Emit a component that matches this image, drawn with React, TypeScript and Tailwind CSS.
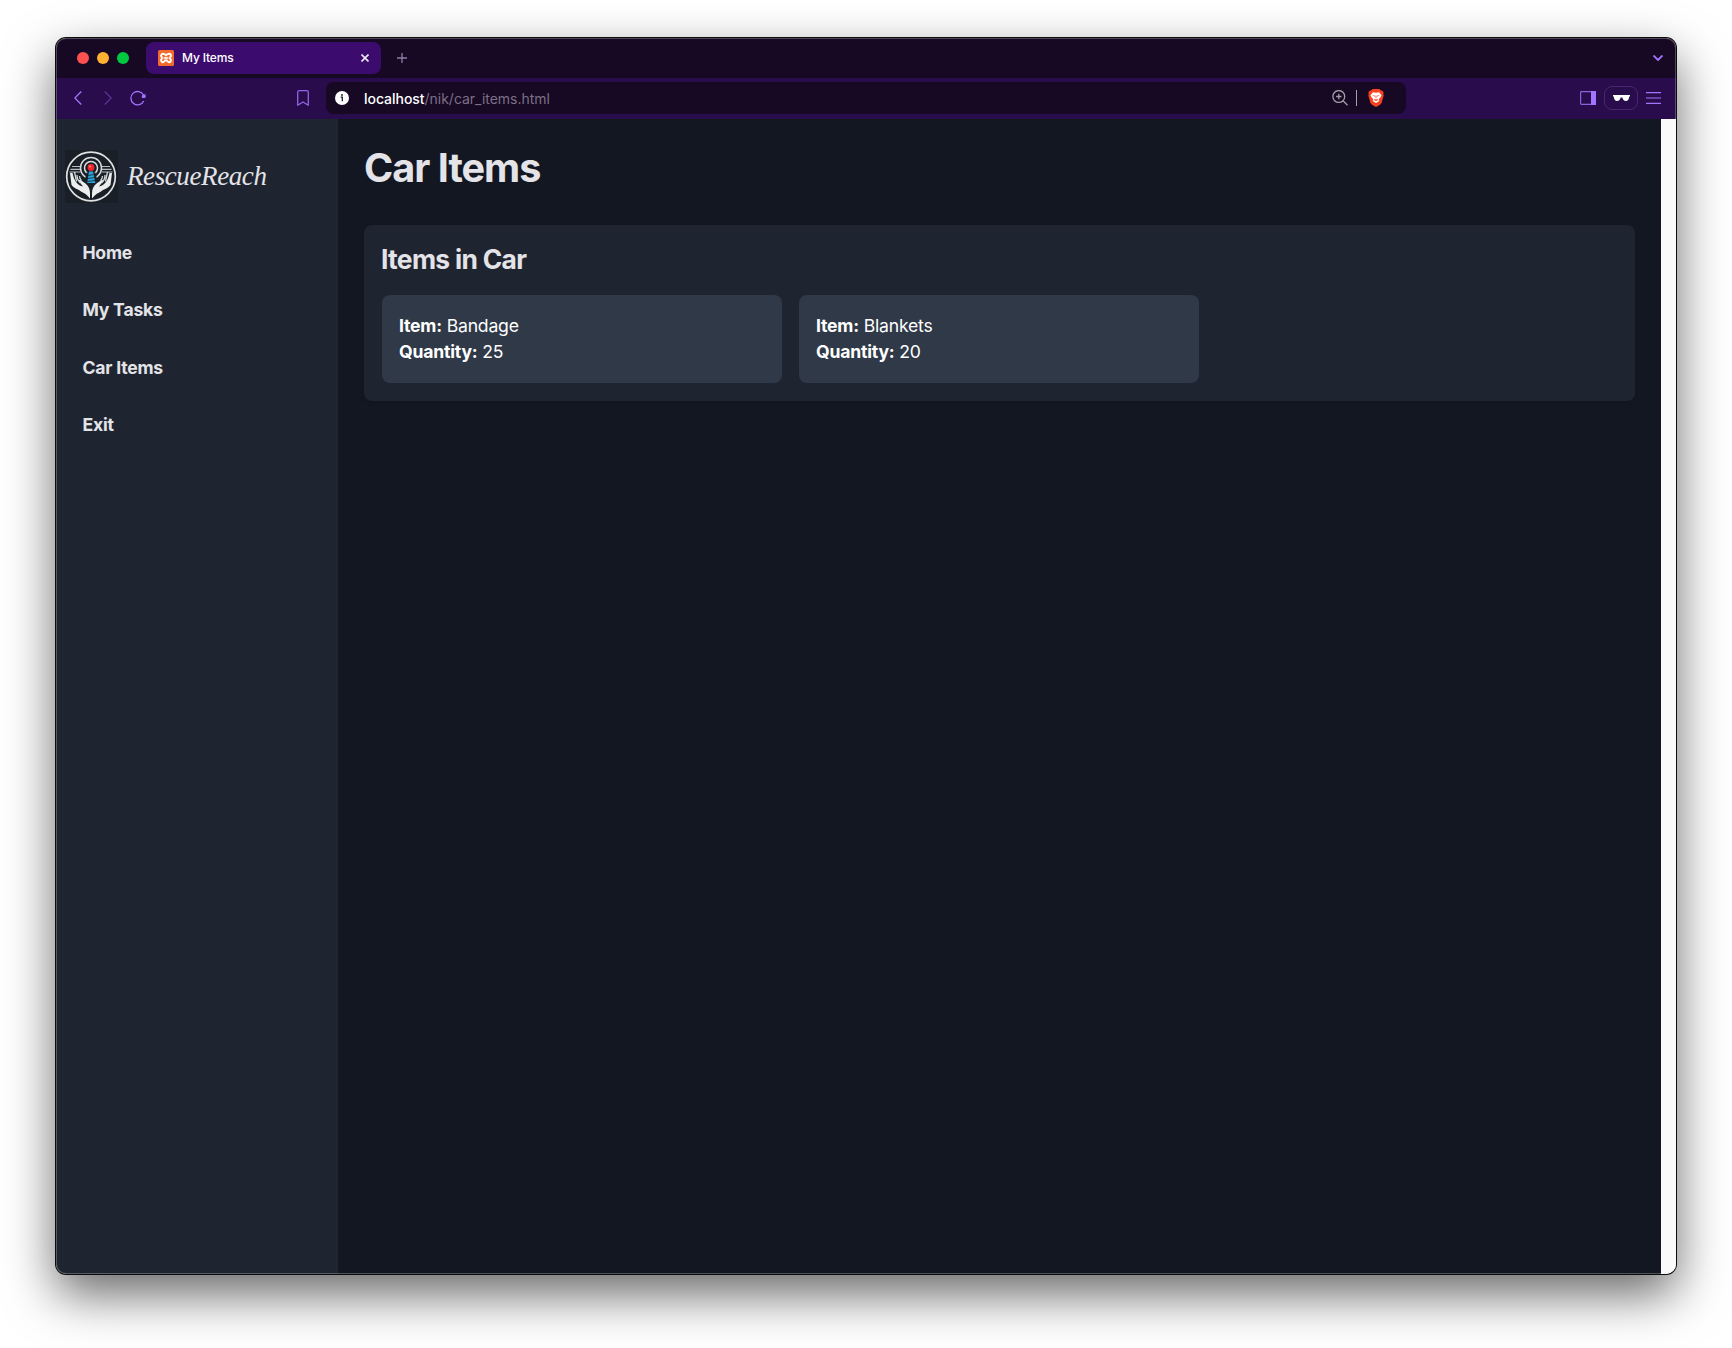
import React from "react";

const items = [
  { name: "Bandage", quantity: 25 },
  { name: "Blankets", quantity: 20 },
];
const links = ["Home", "My Tasks", "Car Items", "Exit"];

function Favicon() {
  return (
    <svg className="h-4 w-4 shrink-0" viewBox="0 0 16 16" fill="none">
      <rect width="16" height="16" rx="1.5" fill="#f26b2c" />
      <path
        d="M5 3.800c1.300 0 1.600.9 3 .9s1.700-.9 3-.9a1.900 1.900 0 0 1 1.900 1.900c0 1-.9 1.300-.9 2.300s.9 1.300.9 2.300a1.900 1.900 0 0 1-1.900 1.900c-1.300 0-1.500-2-3-2s-1.700 2-3 2a1.900 1.900 0 0 1-1.900-1.900c0-1 .9-1.300.9-2.300s-.9-1.300-.9-2.300A1.900 1.900 0 0 1 5 3.800Z"
        stroke="#fff"
        strokeWidth="1.900"
      />
      <path d="M5.500 8h5M8 4.500v1.800" stroke="#fff" strokeWidth="1.500" />
    </svg>
  );
}

function TabStrip() {
  return (
    <div className="flex h-10 shrink-0 items-center bg-[#170823]">
      <div className="flex gap-2 pl-[21px]">
        <span className="h-3 w-3 rounded-full bg-[#ff5152]" />
        <span className="h-3 w-3 rounded-full bg-[#ffb134]" />
        <span className="h-3 w-3 rounded-full bg-[#00c93f]" />
      </div>
      <div className="ml-[17px] flex h-8 w-[235px] items-center rounded-lg bg-[#3b0c6e] pl-3">
        <Favicon />
        <span className="ml-2 text-[12px] font-medium tracking-[-0.15px] text-white">My Items</span>
        <svg className="mr-3 ml-auto h-2 w-2" viewBox="0 0 8 8" stroke="#eee9f5" strokeWidth="1.600">
          <path d="M.5.5l7 7M7.500.5l-7 7" />
        </svg>
      </div>
      <svg className="ml-4 h-[10px] w-[10px]" viewBox="0 0 10 10" stroke="#8f7da6" strokeWidth="1.300">
        <path d="M5 0v10M0 5h10" />
      </svg>
      <svg className="mr-[13px] ml-auto h-[6px] w-[10px]" viewBox="0 0 10 6" fill="none" stroke="#a274ff" strokeWidth="1.800">
        <path d="M.5.500 5 5 9.500.500" />
      </svg>
    </div>
  );
}

function Toolbar() {
  return (
    <div className="flex h-[41px] shrink-0 items-center bg-[#280c4b] pb-px">
      <svg className="ml-[18px] h-[14px] w-2" viewBox="0 0 8 14" fill="none" stroke="#a274ff" strokeWidth="1.300">
        <path d="M7.300.5.800 7l6.500 6.500" />
      </svg>
      <svg className="ml-[22px] h-[14px] w-2" viewBox="0 0 8 14" fill="none" stroke="#5b3394" strokeWidth="1.300">
        <path d="M.700.5 7.200 7 .700 13.500" />
      </svg>
      <svg className="ml-[18px] h-4 w-4" viewBox="0 0 16 16" fill="none" stroke="#a274ff" strokeWidth="1.300">
        <path d="M13.500 5A6.700 6.700 0 1 0 13.700 11" />
        <path d="M15.500 3.500v4.300h-4z" fill="#a274ff" stroke="none" />
        <circle cx="13.600" cy="6.200" r="1.700" fill="#a274ff" stroke="none" />
      </svg>
      <svg className="ml-[151px] h-4 w-3" viewBox="0 0 12 16" fill="none" stroke="#9166e6" strokeWidth="1.300" strokeLinejoin="round">
        <path d="M.7 15.200V2.200C.7 1.300 1.300.7 2.200.7h7.600c.900 0 1.500.6 1.500 1.500v13L6 12z" />
      </svg>
      <div className="ml-[17px] flex h-8 w-[1080px] items-center rounded-lg bg-[#170823] pl-[9px]">
        <svg className="h-[14px] w-[14px]" viewBox="0 0 14 14">
          <circle cx="7" cy="7" r="7" fill="#fff" />
          <circle cx="7" cy="4" r=".9" fill="#170823" />
          <path d="M5.700 6.200H7.300v4" stroke="#170823" strokeWidth="1.200" fill="none" />
        </svg>
        <span className="ml-[15px] text-[14px] tracking-[-0.03px] text-[#7b7086]">
          <span className="font-medium text-white">localhost</span>/nik/car_items.html
        </span>
        <svg className="ml-auto h-4 w-4" viewBox="0 0 16 16" fill="none" stroke="#a39ea9" strokeWidth="1.300">
          <circle cx="6.800" cy="6.500" r="5.900" />
          <path d="M11 10.800l4.500 4.500M6.800 3.800v5.400M4.100 6.500h5.400" />
        </svg>
        <span className="ml-2 h-4 w-px bg-[#a39ea9]" />
        <svg className="mr-[22px] ml-[11px] h-[18px] w-4" viewBox="0 0 16 18">
          <path
            d="M4.500 0h7l1.400 1.500 1.600.2 1.200 2-.5 1.500.5 1.300-2.200 7.600c-.300 1-3 2.700-5.500 3.900-2.500-1.200-5.200-2.900-5.500-3.900L.300 6.500.800 5.200.300 3.700l1.200-2 1.600-.2z"
            fill="#fb4220"
          />
          <path
            d="M5 3.200 8 3.700l3-.5 2.500 3-1 2-1.800 2 .5 1.800L8 14l-3.200-2 .5-1.800-1.800-2-1-2z"
            fill="#fff"
          />
          <path
            d="M4 6l3 .7-.4 1.100zM12 6l-3 .7.4 1.100zM7.600 6.500h.8v2.700h-.8zM6 9.700l2 .9 2-.9-.7 1.700L8 12l-1.300-.6z"
            fill="#fb4220"
          />
        </svg>
      </div>
      <svg className="ml-auto h-[14px] w-4" viewBox="0 0 16 14">
        <rect x=".6" y=".6" width="14.800" height="12.800" rx=".8" fill="none" stroke="#8b60dd" strokeWidth="1.200" />
        <path d="M11 0h5v14h-5z" fill="#a274ff" />
      </svg>
      <div className="ml-2 flex h-6 w-[34px] items-center justify-center rounded-lg border border-[#472570]">
        <svg className="h-[6px] w-[17px]" viewBox="0 0 17 6" fill="#fff">
          <path d="M0 0h17v1.300l-.8.5c-.2 2.600-1.300 4.200-3.200 4.200-2.100 0-3.200-1.300-3.600-3.400h-1.800C7.200 4.700 6.100 6 4 6 2.100 6 1 4.400.8 1.800L0 1.300z" />
        </svg>
      </div>
      <svg className="mr-[15px] ml-2 h-3 w-[15px]" viewBox="0 0 15 12" stroke="#a274ff" strokeWidth="1.200">
        <path d="M0 .600h15M0 6h15M0 11.400h15" />
      </svg>
    </div>
  );
}

function Logo() {
  return (
    <svg className="h-[53px] w-[53px] shrink-0" viewBox="0 0 53 53" fill="none">
      <rect width="53" height="53" fill="#191f26" />
      <circle cx="26" cy="26.500" r="24.300" stroke="#dfe1e2" strokeWidth="1.700" />
      <circle cx="26" cy="18" r="10.500" stroke="#d9dcde" strokeWidth="1.500" />
      <circle cx="26" cy="18" r="6.500" stroke="#d9dcde" strokeWidth="1.500" />
      <path d="M21.500 22.500h9l2.500 11h-14z" fill="#191f26" />
      <path
        d="M7 16.500h8M5.500 19.300h9.500M4.500 22h11M37 16.500h8M37 19.300h9.500M36.500 22h11"
        stroke="#b9bdc0"
        strokeWidth="1.200"
      />
      <path d="M24 21.500h4l2.300 11.500h-8z" fill="#2ba3d8" />
      <path d="M23.500 25.500l5-1M23 28.500l6.500-1M22.500 31.500l7.500-1" stroke="#14303f" strokeWidth=".9" />
      <circle cx="26" cy="17.500" r="3.400" fill="#f4252c" />
      <circle cx="25" cy="16.500" r="1" fill="#ff8b85" />
      <path
        d="M5 23l1.500 12c3 4 6 3.500 9.500 6.500 3 1.500 6 3 9 7V43c0-4-1.500-7-4.500-9.500L15.500 30c-1.800-.5-2.500.8-1 2l3.500 4.500C13 36 9 31 7.500 23z"
        fill="#eceeee"
      />
      <path
        d="M47 23l-1.500 12c-3 4-6 3.500-9.500 6.500-3 1.500-6 3-9 7V43c0-4 1.500-7 4.500-9.500L36.500 30c1.800-.5 2.500.8 1 2L34 36.500C39 36 43 31 44.500 23z"
        fill="#eceeee"
      />
      <path
        d="M9.500 22l2 9.500M12 25c0 4 1 6 3.500 8M14.500 26c0 2 .7 3.500 2 4.500M42.500 22l-2 9.500M40 25c0 4-1 6-3.500 8M37.500 26c0 2-.7 3.500-2 4.500"
        stroke="#d5d8da"
        strokeWidth="1.300"
      />
    </svg>
  );
}

function Sidebar() {
  return (
    <aside className="w-[282px] shrink-0 bg-[#1f2530] text-[#e3e3e8]">
      <div className="flex items-center pt-[31px] pl-[9px]">
        <Logo />
        <span className="ml-[9px] font-['Liberation_Serif',serif] text-[27px] leading-none tracking-[-0.4px] italic">
          RescueReach
        </span>
      </div>
      <nav className="mt-[24px] flex flex-col gap-[4.400px] pl-[26.400px]">
        {links.map((link) => (
          <a key={link} className="flex h-[52.800px] items-center text-[17.600px] font-bold tracking-[-0.2px]">
            {link}
          </a>
        ))}
      </nav>
    </aside>
  );
}

export default function App() {
  return (
    <div className="h-[1348px] w-[1732px] overflow-hidden bg-white px-14 pt-[38px] font-['Inter',sans-serif]">
      <div className="relative flex h-[1236px] w-[1620px] flex-col overflow-hidden rounded-[10px] shadow-[0_0_0_1px_#0b0b0c,0_20px_50px_rgba(0,0,0,0.6)]">
        <TabStrip />
        <Toolbar />
        <div className="flex flex-1">
          <Sidebar />
          <main className="flex-1 bg-[#131721] px-[26px] pt-[27px]">
            <h1 className="text-[39.600px] leading-[44px] font-bold tracking-[-1px] text-[#e3e3e8]">Car Items</h1>
            <section className="mt-[35px] h-[176px] rounded-lg bg-[#1f2530] px-[18px] pt-[17px] shadow-[0_2px_4px_rgba(0,0,0,0.1)]">
              <h2 className="-ml-px text-[26.400px] leading-[35px] font-bold tracking-[-0.68px] text-[#e3e3e8]">
                Items in Car
              </h2>
              <div className="mt-[18px] flex gap-[17px]">
                {items.map((item) => (
                  <article
                    key={item.name}
                    className="h-[88px] w-[400px] rounded-lg bg-[#303948] px-[17px] pt-[17.600px] text-[17.600px] leading-[26.400px] tracking-[-0.2px] text-white"
                  >
                    <p>
                      <strong className="font-bold">Item:</strong> {item.name}
                    </p>
                    <p>
                      <strong className="font-bold">Quantity:</strong> {item.quantity}
                    </p>
                  </article>
                ))}
              </div>
            </section>
          </main>
          <div className="w-[15px] bg-[#fafafa]" />
        </div>
        <div className="pointer-events-none absolute inset-0 rounded-[10px] border border-white/25" />
      </div>
    </div>
  );
}
